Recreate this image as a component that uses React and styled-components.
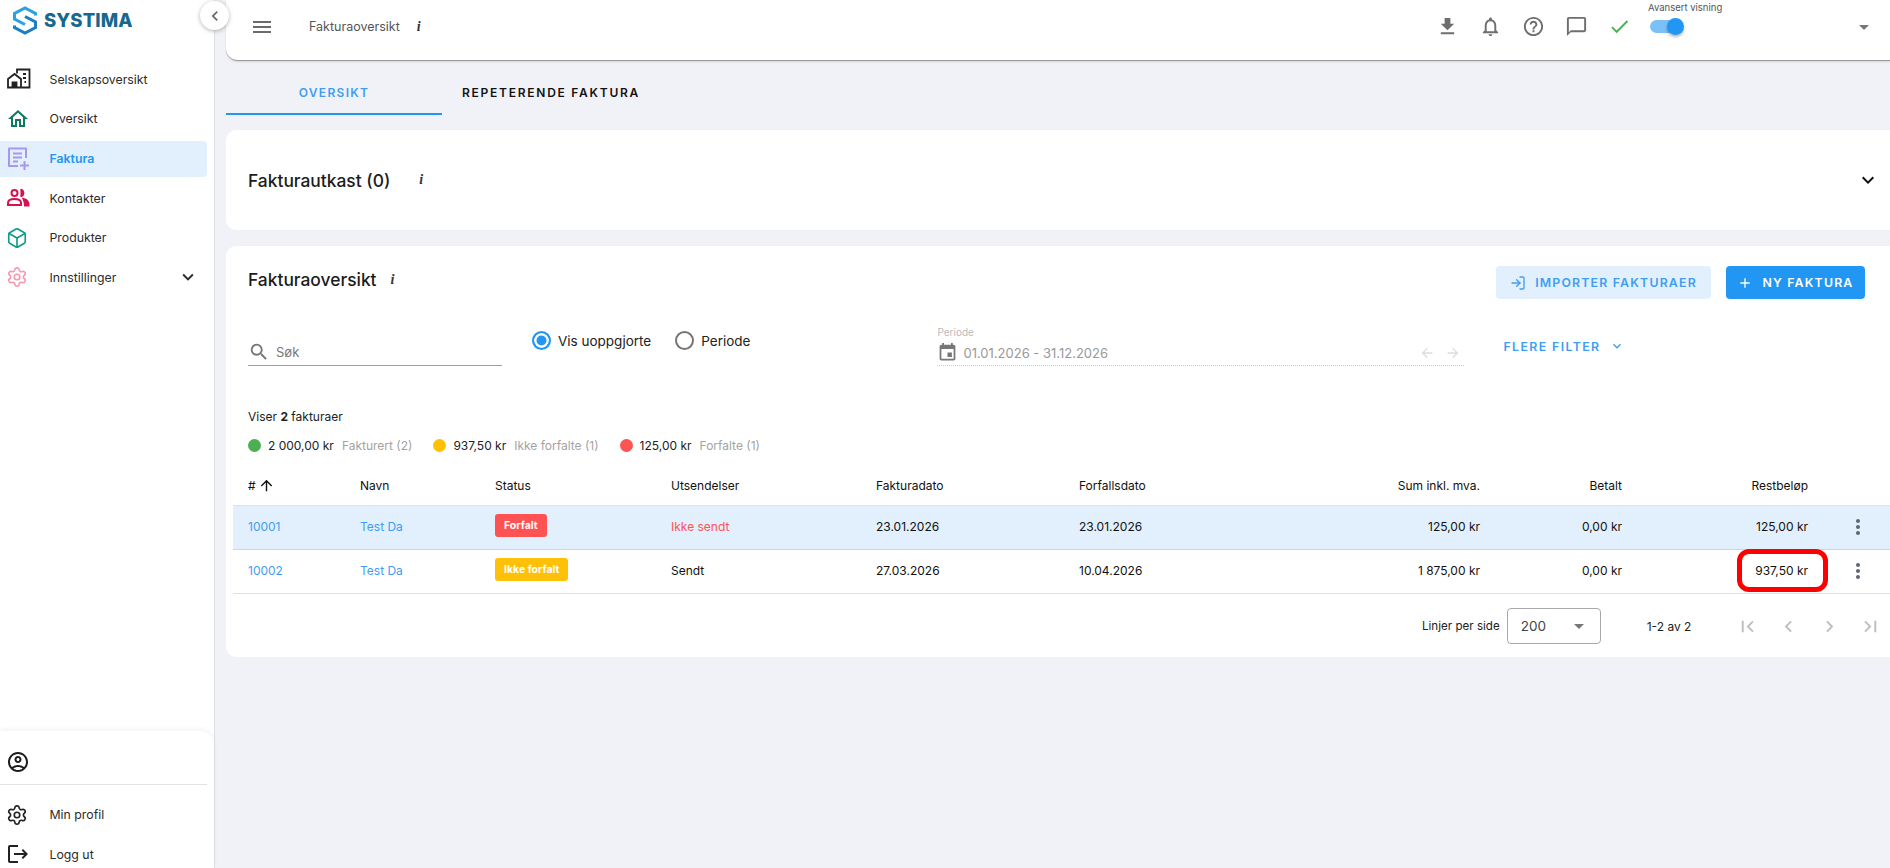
import styled, { createGlobalStyle } from 'styled-components';
import { Box, LogIn, Settings } from 'lucide-react';
import {
  MdOutlineHome,
  MdOutlineAccountCircle,
  MdLogout,
  MdKeyboardArrowDown,
  MdChevronLeft,
  MdChevronRight,
  MdMenu,
  MdFileDownload,
  MdOutlineNotifications,
  MdHelpOutline,
  MdChatBubbleOutline,
  MdCheck,
  MdArrowDropDown,
  MdSearch,
  MdEvent,
  MdArrowBack,
  MdArrowForward,
  MdAdd,
  MdArrowUpward,
  MdMoreVert,
  MdFirstPage,
  MdLastPage,
} from 'react-icons/md';

const GlobalStyle = createGlobalStyle`
  html, body {
    margin: 0;
    height: 100%;
    overflow: hidden;
    background: #f1f2f8;
    font-family: Inter, "Liberation Sans", sans-serif;
    color: #1c1c1c;
  }
  * { box-sizing: border-box; }
`;

const Shell = styled.div`
  display: flex;
  height: 100vh;
`;

const Sidebar = styled.aside`
  position: relative;
  flex: 0 0 215px;
  display: flex;
  flex-direction: column;
  justify-content: space-between;
  background: #fff;
  border-right: 1px solid #dfe0e6;
`;

const LogoRow = styled.div`
  display: flex;
  align-items: center;
  gap: 7px;
  height: 40px;
  padding-left: 13px;
`;

const LogoText = styled.span`
  font-size: 18.5px;
  font-weight: 800;
  letter-spacing: 0.1px;
  color: #15688f;
`;

const CollapseButton = styled.button`
  position: absolute;
  top: 1px;
  left: 200px;
  width: 29px;
  height: 29px;
  padding: 0;
  display: flex;
  align-items: center;
  justify-content: center;
  background: #fff;
  border: 0;
  border-radius: 50%;
  box-shadow: 0 1px 4px rgba(0, 0, 0, 0.3);
  color: #666;
  font-size: 20px;
  z-index: 2;
`;

const NavList = styled.nav`
  display: flex;
  flex-direction: column;
  margin-top: 19.7px;
`;

const NavItem = styled.div`
  flex: none;
  display: flex;
  align-items: center;
  height: ${props => (props.$active ? '36px' : '39.5px')};
  margin: ${props => (props.$active ? '2px 0' : '0')};
  width: 207px;
  padding-left: 6px;
  padding-bottom: ${props => (props.$active ? '1px' : '0')};
  border-radius: 0 4px 4px 0;
  background: ${props => (props.$active ? '#e1f0fc' : 'transparent')};
  color: ${props => (props.$active ? '#2196f3' : '#2b2b2b')};
  font-size: 12.3px;
  font-weight: ${props => (props.$active ? 600 : 400)};
`;

const NavIcon = styled.span`
  flex: 0 0 43.5px;
  display: flex;
  align-items: center;
  font-size: 24px;
  color: ${props => props.$color || '#222'};
`;

const NavLabel = styled.span`
  flex: 1;
`;

const NavCaret = styled.span`
  display: flex;
  font-size: 22px;
  margin-right: 8px;
`;

const BottomPanel = styled.div`
  display: flex;
  flex-direction: column;
  height: 137px;
  border-radius: 0 14px 0 0;
  background: #fff;
  box-shadow: 0 -2px 5px rgba(0, 0, 0, 0.05);
`;

const ProfileRow = styled.div`
  flex: none;
  display: flex;
  align-items: center;
  height: 54px;
  width: 207px;
  margin-bottom: 10px;
  padding: 8px 0 0 6px;
  border-bottom: 1px solid #e2e2e2;
  font-size: 24px;
`;

const Main = styled.main`
  flex: 1;
  min-width: 0;
  display: flex;
  flex-direction: column;
  padding-left: 11px;
`;

const TopBar = styled.header`
  display: flex;
  align-items: center;
  height: 61px;
  padding: 0 14px 7px 24px;
  background: #fff;
  border-radius: 0 0 0 12px;
  border-bottom: 1px solid #9a9a9a;
  box-shadow: 0 1px 2px rgba(0, 0, 0, 0.12);
`;

const MenuIcon = styled.span`
  display: flex;
  font-size: 24px;
  color: #6b6b6b;
  margin-right: 35px;
`;

const TopTitle = styled.span`
  font-size: 12.5px;
  color: #555;
`;

const InfoMark = styled.i`
  font-family: "Liberation Serif", serif;
  font-weight: 700;
  font-size: 14px;
  color: #333;
  margin-left: ${props => props.$gap || 14}px;
`;

const TopActions = styled.div`
  margin-left: auto;
  display: flex;
  align-items: center;
`;

const TopIcon = styled.span`
  display: flex;
  justify-content: center;
  width: 43px;
  font-size: 23px;
  color: ${props => props.$color || '#6e6e6e'};
`;

const SwitchBox = styled.div`
  position: relative;
  width: 226px;
  margin-left: 9px;
  display: flex;
  align-items: center;
  height: 24px;
`;

const SwitchLabel = styled.span`
  position: absolute;
  left: -2px;
  top: -13px;
  font-size: 9.5px;
  white-space: nowrap;
  color: #555;
`;

const SwitchTrack = styled.span`
  position: relative;
  width: 30px;
  height: 13px;
  border-radius: 7px;
  background: #7cc0f8;
`;

const SwitchThumb = styled.span`
  position: absolute;
  right: -4px;
  top: -2px;
  width: 17px;
  height: 17px;
  border-radius: 50%;
  background: #2196f3;
  box-shadow: 0 2px 3px rgba(0, 0, 0, 0.3);
`;

const AccountCaret = styled.span`
  display: flex;
  margin-left: auto;
  font-size: 24px;
  color: #777;
`;

const Tabs = styled.div`
  display: flex;
  height: 54px;
  flex: none;
`;

const Tab = styled.div`
  width: ${props => props.$width}px;
  display: flex;
  align-items: center;
  justify-content: center;
  padding-top: 11px;
  font-size: 12px;
  font-weight: 600;
  letter-spacing: ${props => (props.$active ? '1.3px' : '1.75px')};
  color: ${props => (props.$active ? '#3f9df2' : '#111')};
  border-bottom: 2px solid ${props => (props.$active ? '#2196f3' : 'transparent')};
`;

const DraftCard = styled.section`
  display: flex;
  align-items: center;
  height: 100px;
  margin-top: 15px;
  padding: 0 10px 0 22px;
  background: #fff;
  border-radius: 10px 0 0 10px;
`;

const CardTitle = styled.h2`
  margin: 0;
  font-size: 17.4px;
  font-weight: 500;
  color: #1c1c1c;
`;

const DraftCaret = styled.span`
  display: flex;
  margin-left: auto;
  font-size: 24px;
  color: #111;
`;

const InvoiceCard = styled.section`
  height: 411px;
  margin-top: 16px;
  background: #fff;
  border-radius: 10px 0 0 10px;
  display: flex;
  flex-direction: column;
`;

const CardHead = styled.div`
  display: flex;
  align-items: flex-start;
  height: 84px;
  padding: 20px 25px 0 22px;
`;

const TitleRow = styled.div`
  display: flex;
  align-items: center;
  margin-top: 3px;
`;

const HeadActions = styled.div`
  margin-left: auto;
  display: flex;
  gap: 15px;
`;

const ActionButton = styled.button`
  display: flex;
  align-items: center;
  justify-content: center;
  gap: 9px;
  width: ${props => props.$width}px;
  height: 33px;
  border: 0;
  border-radius: 4px;
  padding: 0;
  font-family: inherit;
  font-size: 12.3px;
  font-weight: 600;
  letter-spacing: 1.2px;
  background: ${props => (props.$solid ? '#2196f3' : '#e1f0fc')};
  color: ${props => (props.$solid ? '#fff' : '#3f9df2')};
  svg { width: 16px; height: 16px; }
`;

const FilterRow = styled.div`
  display: flex;
  height: 79px;
  padding-left: 22px;
`;

const SearchField = styled.div`
  width: 254px;
  height: 36px;
  display: flex;
  align-items: center;
  gap: 6px;
  padding: 8px 0 0 0;
  border-bottom: 1px solid #9e9e9e;
  font-size: 13px;
  color: #777;
  svg { font-size: 22px; color: #757575; }
`;

const RadioGroup = styled.div`
  display: flex;
  align-items: flex-start;
  margin-left: 30px;
  margin-top: 1px;
`;

const RadioLabel = styled.label`
  display: flex;
  align-items: center;
  gap: 7px;
  margin-right: 24px;
  font-size: 13.5px;
  color: #222;
`;

const RadioDot = styled.span`
  width: 19px;
  height: 19px;
  border-radius: 50%;
  border: 2px solid ${props => (props.$on ? '#2196f3' : '#757575')};
  background: ${props => (props.$on ? '#2196f3' : '#fff')};
  box-shadow: inset 0 0 0 2.5px #fff;
`;

const PeriodField = styled.div`
  position: relative;
  width: 527px;
  height: 36px;
  margin-left: 163px;
  display: flex;
  align-items: center;
  gap: 5px;
  padding-top: 10px;
  border-bottom: 1px dotted #ccc;
  font-size: 13px;
  color: #999;
`;

const PeriodLabel = styled.span`
  position: absolute;
  top: -4px;
  left: 0;
  font-size: 10px;
  color: #bbb;
`;

const PeriodIcon = styled.span`
  display: flex;
  font-size: 21px;
  color: #777;
`;

const PeriodArrows = styled.span`
  display: flex;
  margin-left: auto;
  gap: 10px;
  padding-right: 3px;
  font-size: 16px;
  color: #ddd;
`;

const MoreFilters = styled.div`
  display: flex;
  align-items: center;
  gap: 9px;
  height: 22px;
  margin-left: 39px;
  margin-top: 5px;
  font-size: 12.3px;
  font-weight: 600;
  letter-spacing: 1.4px;
  color: #3f9df2;
  svg { font-size: 16px; }
`;

const Summary = styled.div`
  padding: 0 0 0 22px;
  height: 51px;
  font-size: 12px;
`;

const SummaryCount = styled.div`
  margin-bottom: 14px;
  color: #222;
`;

const SummaryLine = styled.div`
  display: flex;
  align-items: center;
`;

const Dot = styled.span`
  width: 13px;
  height: 13px;
  border-radius: 50%;
  margin-right: 7px;
  background: ${props => props.$color};
`;

const Amount = styled.span`
  margin-right: 8px;
  color: #222;
`;

const Muted = styled.span`
  margin-right: 21px;
  color: #a3a3a3;
`;

const Table = styled.div`
  margin-left: 7px;
  font-size: 12px;
`;

const Row = styled.div`
  position: relative;
  display: grid;
  grid-template-columns: 112px 135px 176px 205px 203px 201px 200px 142px 186px 1fr;
  align-items: center;
  height: ${props => (props.$head ? '46px' : '44px')};
  padding: ${props => (props.$head ? '5px 0 0 15px' : '0 0 3px 15px')};
  border-bottom: 1px solid ${props => (props.$tint ? '#cdd6df' : '#e2e2e2')};
  background: ${props => (props.$tint ? '#e1f0fc' : 'transparent')};
`;

const Cell = styled.span`
  display: flex;
  align-items: center;
  justify-content: ${props => (props.$right ? 'flex-end' : 'flex-start')};
  color: ${props => props.$color || '#111'};
`;

const SortIcon = styled.span`
  display: flex;
  font-size: 17px;
  margin-left: 2px;
  color: #111;
`;

const Badge = styled.span`
  padding: 0 9px;
  height: 23px;
  display: flex;
  align-items: center;
  margin-top: -2px;
  border-radius: 3px;
  font-size: 10.5px;
  font-weight: 700;
  color: #fff;
  background: ${props => props.$color};
`;

const RowMenu = styled.span`
  display: flex;
  margin-left: 38px;
  margin-top: 2px;
  font-size: 24px;
  color: #5f6673;
`;

const Highlight = styled.span`
  position: absolute;
  left: 1504px;
  top: -1px;
  width: 91px;
  height: 43px;
  border: 5px solid #f00;
  border-radius: 12px;
`;

const Pagination = styled.div`
  display: flex;
  align-items: center;
  height: 62px;
  padding-top: 2px;
  margin-left: 7px;
  font-size: 12px;
  color: #222;
  white-space: nowrap;
`;

const PagerLabel = styled.span`
  margin-left: 1189px;
  margin-right: 7px;
  font-size: 11.6px;
`;

const PagerSelect = styled.div`
  flex: none;
  display: flex;
  align-items: center;
  justify-content: space-between;
  width: 94px;
  height: 36px;
  padding: 0 9px 0 13px;
  border: 1px solid #a8a8a8;
  border-radius: 4px;
  font-size: 13.5px;
  color: #444;
  svg { font-size: 24px; color: #777; }
`;

const PagerCount = styled.span`
  margin-left: 46px;
  margin-right: 36px;
`;

const PagerIcon = styled.span`
  flex: none;
  display: flex;
  justify-content: center;
  width: 41px;
  font-size: 23px;
  color: #bdbdbd;
`;

function LogoMark() {
  return (
    <svg width="24" height="29" viewBox="0 0 24 29" fill="none" strokeWidth="3">
      <path d="M22.5 9.5 V7.5 L12 2 L1.5 7.5 V13 L12 18.5" stroke="#2aa0e6" />
      <path d="M1.5 19.5 V21.5 L12 27 L22.5 21.5 V16 L12 10.5" stroke="#1c7fc6" />
    </svg>
  );
}

function CompanyIcon() {
  return (
    <svg width="25" height="24" viewBox="0 0 25 24" fill="none" stroke="currentColor" strokeWidth="1.8">
      <path d="M11 6.5 V2.5 H23.5 V20.5 H16" />
      <path d="M2 12 L8.5 7 L15 12 V20.5 H2 Z" />
      <path d="M6.5 20.5 V15.5 H10.5 V20.5" fill="currentColor" />
      <path d="M17 7 H20 M17 11 H20 M18.5 15 H20" />
    </svg>
  );
}

function InvoiceIcon() {
  return (
    <svg width="24" height="24" viewBox="0 0 24 24" fill="none" stroke="currentColor" strokeWidth="2">
      <path d="M12 20 H3 V2.5 H20 V12" strokeLinejoin="round" />
      <path d="M7 7.5 H16 M7 11.5 H16 M7 15.5 H12" />
      <path d="M14 19.5 H23 M18.5 15 V24" />
    </svg>
  );
}

function ContactsIcon() {
  return (
    <svg width="24" height="24" viewBox="0 0 24 24" fill="none" stroke="currentColor" strokeWidth="2">
      <circle cx="8.5" cy="7" r="3" />
      <path d="M2 19 V17 C2 14 5 13 8.5 13 C12 13 15 14 15 17 V19 Z" />
      <path d="M14.5 3.8 C18 3.5 18.5 10 14.5 10.2" fill="currentColor" />
      <path d="M17.5 13 C20.5 13.5 22.5 15 22.5 19.5 H19 C19 17 18.5 15 17.5 13 Z" fill="currentColor" />
    </svg>
  );
}

const navItems = [
  { label: 'Selskapsoversikt', icon: <CompanyIcon />, color: '#222' },
  { label: 'Oversikt', icon: <MdOutlineHome />, color: '#0f7a5f' },
  { label: 'Faktura', icon: <InvoiceIcon />, color: '#a996ee', active: true },
  { label: 'Kontakter', icon: <ContactsIcon />, color: '#d6124f' },
  { label: 'Produkter', icon: <Box size={22} strokeWidth={1.8} />, color: '#0f9a8a' },
  { label: 'Innstillinger', icon: <Settings size={22} strokeWidth={1.8} />, color: '#f79ab0', caret: true },
];

const invoices = [
  {
    id: '10001',
    badge: 'Forfalt',
    badgeColor: '#ff5252',
    sent: 'Ikke sendt',
    sentColor: '#ff5252',
    date: '23.01.2026',
    due: '23.01.2026',
    sum: '125,00 kr',
    rest: '125,00 kr',
    tint: true,
  },
  {
    id: '10002',
    badge: 'Ikke forfalt',
    badgeColor: '#ffc107',
    sent: 'Sendt',
    date: '27.03.2026',
    due: '10.04.2026',
    sum: '1 875,00 kr',
    rest: '937,50 kr',
    marked: true,
  },
];

function App() {
  return (
    <>
      <GlobalStyle />
      <Shell>
        <Sidebar>
          <CollapseButton>
            <MdChevronLeft />
          </CollapseButton>
          <div>
            <LogoRow>
              <LogoMark />
              <LogoText>SYSTIMA</LogoText>
            </LogoRow>
            <NavList>
              {navItems.map(item => (
                <NavItem key={item.label} $active={item.active}>
                  <NavIcon $color={item.color}>{item.icon}</NavIcon>
                  <NavLabel>{item.label}</NavLabel>
                  {item.caret && (
                    <NavCaret>
                      <MdKeyboardArrowDown />
                    </NavCaret>
                  )}
                </NavItem>
              ))}
            </NavList>
          </div>
          <BottomPanel>
            <ProfileRow>
              <MdOutlineAccountCircle />
            </ProfileRow>
            <NavItem>
              <NavIcon>
                <Settings size={22} strokeWidth={1.8} />
              </NavIcon>
              <NavLabel>Min profil</NavLabel>
            </NavItem>
            <NavItem>
              <NavIcon>
                <MdLogout />
              </NavIcon>
              <NavLabel>Logg ut</NavLabel>
            </NavItem>
          </BottomPanel>
        </Sidebar>
        <Main>
          <TopBar>
            <MenuIcon>
              <MdMenu />
            </MenuIcon>
            <TopTitle>Fakturaoversikt</TopTitle>
            <InfoMark $gap={17}>i</InfoMark>
            <TopActions>
              <TopIcon>
                <MdFileDownload />
              </TopIcon>
              <TopIcon>
                <MdOutlineNotifications />
              </TopIcon>
              <TopIcon>
                <MdHelpOutline />
              </TopIcon>
              <TopIcon>
                <MdChatBubbleOutline />
              </TopIcon>
              <TopIcon $color="#4caf50">
                <MdCheck />
              </TopIcon>
              <SwitchBox>
                <SwitchLabel>Avansert visning</SwitchLabel>
                <SwitchTrack>
                  <SwitchThumb />
                </SwitchTrack>
                <AccountCaret>
                  <MdArrowDropDown />
                </AccountCaret>
              </SwitchBox>
            </TopActions>
          </TopBar>
          <Tabs>
            <Tab $active $width={216}>OVERSIKT</Tab>
            <Tab $width={218}>REPETERENDE FAKTURA</Tab>
          </Tabs>
          <DraftCard>
            <CardTitle>Fakturautkast (0)</CardTitle>
            <InfoMark $gap={29}>i</InfoMark>
            <DraftCaret>
              <MdKeyboardArrowDown />
            </DraftCaret>
          </DraftCard>
          <InvoiceCard>
            <CardHead>
              <TitleRow>
                <CardTitle>Fakturaoversikt</CardTitle>
                <InfoMark>i</InfoMark>
              </TitleRow>
              <HeadActions>
                <ActionButton $width={215}>
                  <LogIn />
                  IMPORTER FAKTURAER
                </ActionButton>
                <ActionButton $solid $width={139}>
                  <MdAdd />
                  NY FAKTURA
                </ActionButton>
              </HeadActions>
            </CardHead>
            <FilterRow>
              <SearchField>
                <MdSearch />
                Søk
              </SearchField>
              <RadioGroup>
                <RadioLabel>
                  <RadioDot $on />
                  Vis uoppgjorte
                </RadioLabel>
                <RadioLabel>
                  <RadioDot />
                  Periode
                </RadioLabel>
              </RadioGroup>
              <PeriodField>
                <PeriodLabel>Periode</PeriodLabel>
                <PeriodIcon>
                  <MdEvent />
                </PeriodIcon>
                01.01.2026 - 31.12.2026
                <PeriodArrows>
                  <MdArrowBack />
                  <MdArrowForward />
                </PeriodArrows>
              </PeriodField>
              <MoreFilters>
                FLERE FILTER
                <MdKeyboardArrowDown />
              </MoreFilters>
            </FilterRow>
            <Summary>
              <SummaryCount>
                Viser <b>2</b> fakturaer
              </SummaryCount>
              <SummaryLine>
                <Dot $color="#4caf50" />
                <Amount>2 000,00 kr</Amount>
                <Muted>Fakturert (2)</Muted>
                <Dot $color="#ffc107" />
                <Amount>937,50 kr</Amount>
                <Muted>Ikke forfalte (1)</Muted>
                <Dot $color="#ff5252" />
                <Amount>125,00 kr</Amount>
                <Muted>Forfalte (1)</Muted>
              </SummaryLine>
            </Summary>
            <Table>
              <Row $head>
                <Cell>
                  #
                  <SortIcon>
                    <MdArrowUpward />
                  </SortIcon>
                </Cell>
                <Cell>Navn</Cell>
                <Cell>Status</Cell>
                <Cell>Utsendelser</Cell>
                <Cell>Fakturadato</Cell>
                <Cell>Forfallsdato</Cell>
                <Cell $right>Sum inkl. mva.</Cell>
                <Cell $right>Betalt</Cell>
                <Cell $right>Restbeløp</Cell>
              </Row>
              {invoices.map(inv => (
                <Row key={inv.id} $tint={inv.tint}>
                  <Cell $color="#3f9df2">{inv.id}</Cell>
                  <Cell $color="#3f9df2">Test Da</Cell>
                  <Cell>
                    <Badge $color={inv.badgeColor}>{inv.badge}</Badge>
                  </Cell>
                  <Cell $color={inv.sentColor}>{inv.sent}</Cell>
                  <Cell>{inv.date}</Cell>
                  <Cell>{inv.due}</Cell>
                  <Cell $right>{inv.sum}</Cell>
                  <Cell $right>0,00 kr</Cell>
                  <Cell $right>{inv.rest}</Cell>
                  <RowMenu>
                    <MdMoreVert />
                  </RowMenu>
                  {inv.marked && <Highlight />}
                </Row>
              ))}
            </Table>
            <Pagination>
              <PagerLabel>Linjer per side</PagerLabel>
              <PagerSelect>
                200
                <MdArrowDropDown />
              </PagerSelect>
              <PagerCount>1-2 av 2</PagerCount>
              <PagerIcon>
                <MdFirstPage />
              </PagerIcon>
              <PagerIcon>
                <MdChevronLeft />
              </PagerIcon>
              <PagerIcon>
                <MdChevronRight />
              </PagerIcon>
              <PagerIcon>
                <MdLastPage />
              </PagerIcon>
            </Pagination>
          </InvoiceCard>
        </Main>
      </Shell>
    </>
  );
}

export default App;
